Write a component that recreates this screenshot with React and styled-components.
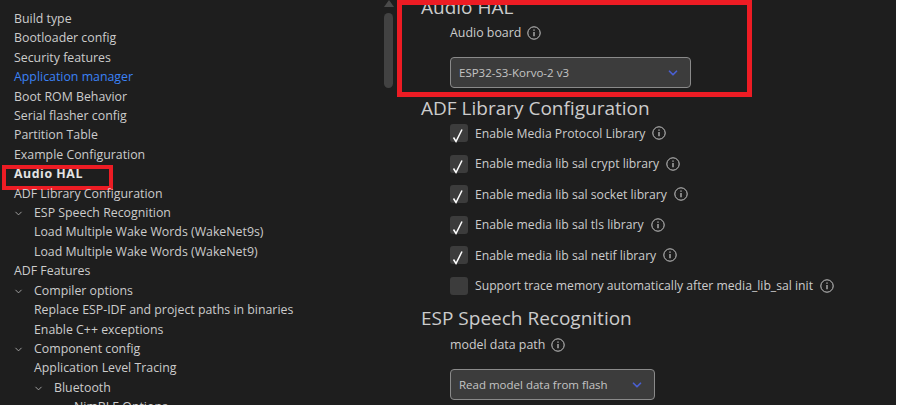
import React from 'react'
import styled, { createGlobalStyle } from 'styled-components'
import { ChevronDown } from 'lucide-react'

const Global = createGlobalStyle`
  html, body { margin: 0; padding: 0; background: #1e1e1e; }
  body { font-family: "Open Sans", "Noto Sans", sans-serif; }
`

const Page = styled.div`
  width: 898px;
  height: 405px;
  overflow: hidden;
  display: flex;
  background: #1e1e1e;
  color: #cccccc;
`

const Sidebar = styled.nav`
  width: 384px;
  flex: none;
  padding-top: 9px;
`

const NavItem = styled.div`
  height: 19.42px;
  line-height: 19.42px;
  font-size: 12.35px;
  white-space: nowrap;
  display: flex;
  align-items: center;
  padding-left: ${p => 14 + p.$depth * 20}px;
  color: ${p => (p.$active ? '#3b82f6' : p.$bold ? '#e4e4e4' : '#cccccc')};
  font-weight: ${p => (p.$bold ? 700 : 400)};
  letter-spacing: ${p => (p.$bold ? 0.55 : 0)}px;
  position: relative;
  svg {
    position: absolute;
    left: ${p => 13 + (p.$depth - 1) * 20}px;
    top: 5px;
    color: #aaaaaa;
  }
`

const Highlight = styled.span`
  position: absolute;
  left: 2px;
  top: 1px;
  width: 111px;
  height: 25px;
  border: 4px solid #ed1c24;
  box-sizing: border-box;
`

const Scroll = styled.div`
  width: 14px;
  flex: none;
  position: relative;
  &::before {
    content: '';
    position: absolute;
    left: 0;
    top: 0;
    border-left: 5px solid transparent;
    border-right: 5px solid transparent;
    border-bottom: 7px solid #4a4a4a;
  }
  &::after {
    content: '';
    position: absolute;
    left: 0;
    top: 13px;
    width: 9px;
    height: 75px;
    border-radius: 5px;
    background: #424242;
  }
`

const Main = styled.main`
  flex: 1;
  padding: 0 0 0 23px;
  position: relative;
`

const Heading = styled.h2`
  margin: ${p => p.$top}px 0 0;
  font-size: 19px;
  line-height: 25px;
  font-weight: 400;
  color: #cccccc;
  white-space: nowrap;
`

const Field = styled.div`
  padding-left: 29px;
`

const Label = styled.div`
  display: flex;
  align-items: center;
  gap: 6px;
  font-size: 12.4px;
  line-height: 18px;
  margin-top: ${p => p.$top}px;
  white-space: nowrap;
`

const Select = styled.div`
  box-sizing: border-box;
  width: ${p => p.$width}px;
  height: 31px;
  margin-top: ${p => p.$top}px;
  padding: 0 10px 0 8px;
  display: flex;
  align-items: center;
  justify-content: space-between;
  background: #3c3c3c;
  border: 1px solid #8a8a8a;
  border-radius: 4px;
  font-size: 11.5px;
  color: #c4c4c4;
  svg { color: #4a5fd0; }
`

const CheckRow = styled.div`
  display: flex;
  align-items: center;
  height: 18px;
  margin-top: ${p => p.$top}px;
  font-size: 12.2px;
  gap: 7px;
  white-space: nowrap;
`

const Box = styled.span`
  width: 18px;
  height: 18px;
  flex: none;
  border-radius: 3px;
  background: #3c3c3c;
  position: relative;
`

const Mark = styled.svg`
  position: absolute;
  left: 1px;
  top: 4px;
`

const TopFrame = styled.div`
  position: absolute;
  left: -1px;
  top: 0;
  width: 355px;
  height: 97px;
  box-sizing: border-box;
  border: 5px solid #ed1c24;
`

const RightEdge = styled.div`
  width: 2px;
  flex: none;
  background: #ffffff;
`

const Info = () => (
  <svg width="14" height="14" viewBox="0 0 14 14" fill="none" stroke="#c8c8c8">
    <circle cx="7" cy="7" r="6.2" strokeWidth="1" />
    <path d="M7 6v4.2M7 3.6v1.2" strokeWidth="1.2" />
  </svg>
)

const Check = ({ label, top, on = true }) => (
  <CheckRow $top={top}>
    <Box>
      {on && (
        <Mark width="14" height="15" viewBox="0 0 14 15" fill="none" stroke="#ffffff" strokeWidth="1.5">
          <path d="M2.5 9.5 L5 13.5 L11 1.5" />
        </Mark>
      )}
    </Box>
    {label}
    <Info />
  </CheckRow>
)

const nav = [
  ['Build type', 0],
  ['Bootloader config', 0],
  ['Security features', 0],
  ['Application manager', 0, 'active'],
  ['Boot ROM Behavior', 0],
  ['Serial flasher config', 0],
  ['Partition Table', 0],
  ['Example Configuration', 0],
  ['Audio HAL', 0, 'bold'],
  ['ADF Library Configuration', 0],
  ['ESP Speech Recognition', 1, 'open'],
  ['Load Multiple Wake Words (WakeNet9s)', 1],
  ['Load Multiple Wake Words (WakeNet9)', 1],
  ['ADF Features', 0],
  ['Compiler options', 1, 'open'],
  ['Replace ESP-IDF and project paths in binaries', 1],
  ['Enable C++ exceptions', 1],
  ['Component config', 1, 'open'],
  ['Application Level Tracing', 1],
  ['Bluetooth', 2, 'open'],
  ['NimBLE Options', 3, 'open'],
]

export default function App() {
  return (
    <Page>
      <Global />
      <Sidebar>
        {nav.map(([text, depth, kind]) => (
          <NavItem key={text} $depth={depth} $active={kind === 'active'} $bold={kind === 'bold'}>
            {kind === 'open' && <ChevronDown size={11} />}
            {kind === 'bold' && <Highlight />}
            {text}
          </NavItem>
        ))}
      </Sidebar>
      <Scroll />
      <Main>
        <TopFrame />
        <Heading $top={-5}>Audio HAL</Heading>
        <Field>
          <Label $top={4}>Audio board <Info /></Label>
          <Select $width={241} $top={15}>
            ESP32-S3-Korvo-2 v3
            <ChevronDown size={14} strokeWidth={3} />
          </Select>
        </Field>
        <Heading $top={8}>ADF Library Configuration</Heading>
        <Field>
          <Check top={3} label="Enable Media Protocol Library" />
          <Check top={12.5} label="Enable media lib sal crypt library" />
          <Check top={12.5} label="Enable media lib sal socket library" />
          <Check top={12.5} label="Enable media lib sal tls library" />
          <Check top={12.5} label="Enable media lib sal netif library" />
          <Check top={12.5} on={false} label="Support trace memory automatically after media_lib_sal init" />
        </Field>
        <Heading $top={11.5}>ESP Speech Recognition</Heading>
        <Field>
          <Label $top={5}>model data path <Info /></Label>
          <Select $width={205} $top={15}>
            Read model data from flash
            <ChevronDown size={14} strokeWidth={3} />
          </Select>
        </Field>
      </Main>
      <RightEdge />
    </Page>
  )
}
